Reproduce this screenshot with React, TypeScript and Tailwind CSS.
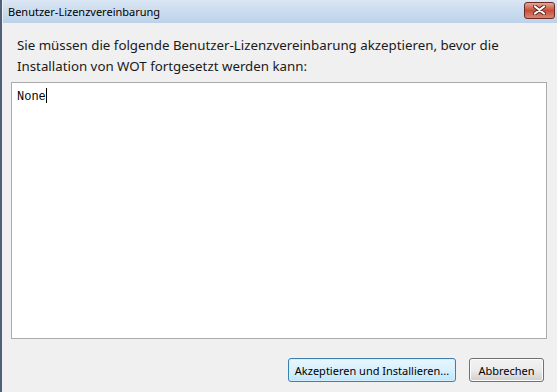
import React from "react";

export default function App() {
  return (
    <div className="w-[557px] h-[392px] overflow-hidden bg-[#f0f0f0] flex flex-col border-l-[2px] border-l-[#4f6178] pl-px relative" style={{ fontFamily: '"Noto Sans", "Open Sans", sans-serif' }}>
      {/* Title bar */}
      <div className="h-[23px] shrink-0 flex items-center justify-between pl-[5px] pr-[2px] bg-gradient-to-b from-[#dae6f3] to-[#bcd2ea]">
        <span className="text-[11px] text-black leading-none">Benutzer-Lizenzvereinbarung</span>
        <div className="w-[31px] h-[17px] mt-[-3px] rounded-[3px] border border-[#6b2a24] bg-gradient-to-b from-[#e3a697] via-[#c84d3a] to-[#d88573] flex items-center justify-center">
          <svg width="13" height="10" viewBox="0 0 13 10">
            <path d="M2 1.5 L11 8.5 M11 1.5 L2 8.5" stroke="#5a2a24" strokeWidth="4" strokeLinecap="round" />
            <path d="M2 1.5 L11 8.5 M11 1.5 L2 8.5" stroke="#ffffff" strokeWidth="2.2" strokeLinecap="round" />
          </svg>
        </div>
      </div>

      {/* Content */}
      <div className="flex-1 flex flex-col pl-[8px] pr-[8px]">
        <p className="mt-[12px] ml-[6px] text-[13.3px] leading-[21px] text-[#1a1a1a]">
          Sie müssen die folgende Benutzer-Lizenzvereinbarung akzeptieren, bevor die
          <br />
          Installation von WOT fortgesetzt werden kann:
        </p>
        <div className="mt-[5px] h-[257px] w-[536px] bg-white border border-[#ababab] px-[5px] pt-[3px] leading-[16px]">
          <span className="text-[12px] text-black" style={{ fontFamily: '"Liberation Mono", "Courier New", monospace' }}>
            None
          </span>
          <span className="inline-block w-px h-[15px] bg-black align-[-3px]" />
        </div>
        <div className="flex justify-end gap-[13px] mt-[19px] pr-[5px]">
          <button className="h-[24px] w-[168px] whitespace-nowrap rounded-[3px] border border-[#3c7fb1] bg-gradient-to-b from-[#eaf6fd] via-[#d9f0fc] to-[#bee6fd] text-[11px] text-black shadow-[inset_0_0_0_1px_#d4f0ff] leading-none">
            Akzeptieren und Installieren...
          </button>
          <button className="h-[24px] w-[75px] whitespace-nowrap rounded-[3px] border border-[#707070] bg-gradient-to-b from-[#f2f2f2] via-[#ebebeb] to-[#cfcfcf] text-[11px] text-black leading-none shadow-[inset_0_0_0_1px_#fcfcfc]">
            Abbrechen
          </button>
        </div>
      </div>
    </div>
  );
}
